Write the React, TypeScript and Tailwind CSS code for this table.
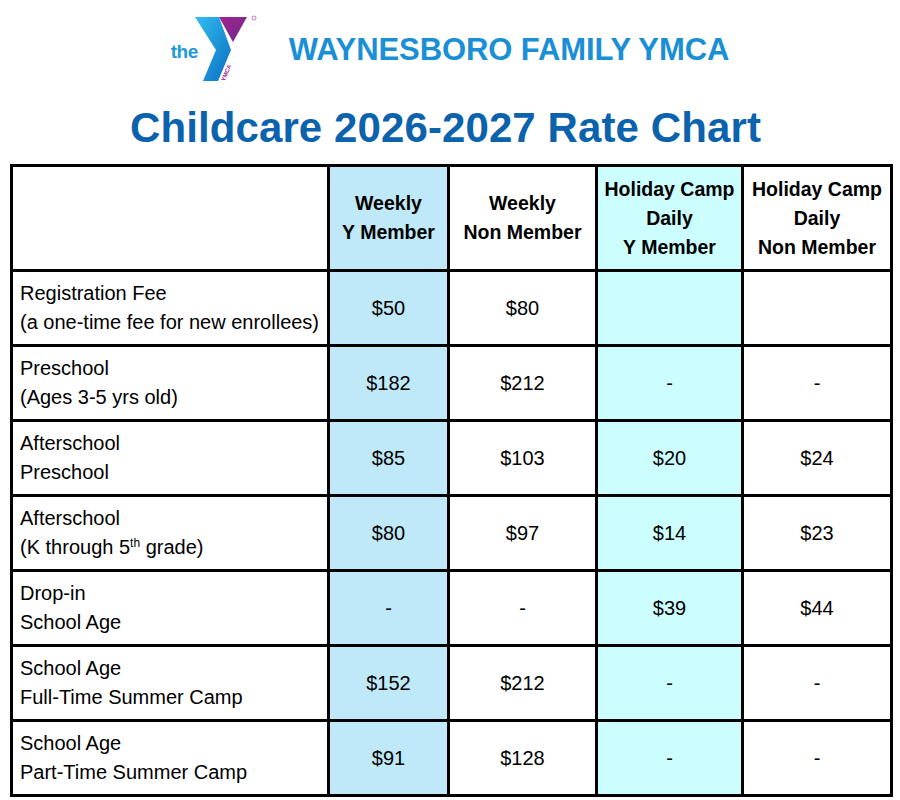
import React from 'react';

type Row = {
  label: React.ReactNode;
  values: string[];
};

const rows: Row[] = [
  {
    label: (
      <>
        Registration Fee
        <br />
        (a one-time fee for new enrollees)
      </>
    ),
    values: ['$50', '$80', '', ''],
  },
  {
    label: (
      <>
        Preschool
        <br />
        (Ages 3-5 yrs old)
      </>
    ),
    values: ['$182', '$212', '-', '-'],
  },
  {
    label: (
      <>
        Afterschool
        <br />
        Preschool
      </>
    ),
    values: ['$85', '$103', '$20', '$24'],
  },
  {
    label: (
      <>
        Afterschool
        <br />
        (K through 5<sup className="text-[12px] -top-[7px]">th</sup> grade)
      </>
    ),
    values: ['$80', '$97', '$14', '$23'],
  },
  {
    label: (
      <>
        Drop-in
        <br />
        School Age
      </>
    ),
    values: ['-', '-', '$39', '$44'],
  },
  {
    label: (
      <>
        School Age
        <br />
        Full-Time Summer Camp
      </>
    ),
    values: ['$152', '$212', '-', '-'],
  },
  {
    label: (
      <>
        School Age
        <br />
        Part-Time Summer Camp
      </>
    ),
    values: ['$91', '$128', '-', '-'],
  },
];

const colBg = ['bg-[#bfe8f8]', 'bg-white', 'bg-[#ccfeff]', 'bg-white'];

function YmcaLogo() {
  return (
    <div className="relative w-[90px] h-[70px] shrink-0">
      <span className="absolute left-0 top-[28px] text-[19px] font-bold text-[#1f9ad8] leading-none tracking-tight">
        the
      </span>
      <svg width="90" height="70" viewBox="0 0 90 70" className="absolute left-0 top-0">
        <defs>
          <linearGradient id="yblue" x1="0" y1="0" x2="1" y2="1">
            <stop offset="0" stopColor="#33bdf0" />
            <stop offset="1" stopColor="#0a6fc2" />
          </linearGradient>
          <linearGradient id="ypurple" x1="0" y1="0" x2="1" y2="1">
            <stop offset="0" stopColor="#a2248f" />
            <stop offset="1" stopColor="#6c2b8c" />
          </linearGradient>
        </defs>
        <path d="M24 3 L48 3 L60 36 L47 67 L32 67 L45 36 Z" fill="url(#yblue)" />
        <path d="M48 3 L76 3 L62 28 Z" fill="url(#ypurple)" />
        <circle cx="83" cy="4" r="2" fill="none" stroke="#a2248f" strokeWidth="0.6" />
      </svg>
      <span className="absolute left-[52px] top-[64px] text-[6px] font-bold text-[#a2248f] leading-none rotate-[-68deg] origin-left">
        YMCA
      </span>
    </div>
  );
}

export default function App() {
  return (
    <div className="w-[900px] h-[800px] bg-white font-['Liberation_Sans',Arial,sans-serif] text-black">
      {/* Header */}
      <div className="flex items-center justify-center gap-[28px] pt-[14px] h-[84px]">
        <YmcaLogo />
        <h1 className="text-[31px] font-bold text-[#1b8fd6] tracking-[-0.1px] leading-none whitespace-nowrap">
          WAYNESBORO FAMILY YMCA
        </h1>
      </div>

      <h2 className="text-center text-[42px] font-bold text-[#0b62ad] leading-none mt-[23px] pr-[9px] tracking-[0.1px]">
        Childcare 2026-2027 Rate Chart
      </h2>

      {/* Rate table */}
      <table className="mt-[15px] ml-[10px] w-[880px] table-fixed border-collapse border-[3px] border-black text-[20px] leading-[29px]">
        <colgroup>
          <col className="w-[317px]" />
          <col className="w-[120px]" />
          <col className="w-[148px]" />
          <col className="w-[146px]" />
          <col className="w-[149px]" />
        </colgroup>
        <thead className="text-[19.5px]">
          <tr className="h-[105px]">
            <th className="border-[3px] border-black bg-white"></th>
            <th className="border-[3px] border-black bg-[#bfe8f8] font-bold">
              Weekly
              <br />Y Member
            </th>
            <th className="border-[3px] border-black bg-white font-bold">
              Weekly
              <br />
              Non Member
            </th>
            <th className="border-[3px] border-black bg-[#ccfeff] font-bold">
              Holiday Camp
              <br />
              Daily
              <br />Y Member
            </th>
            <th className="border-[3px] border-black bg-white font-bold">
              Holiday Camp
              <br />
              Daily
              <br />
              Non Member
            </th>
          </tr>
        </thead>
        <tbody>
          {rows.map((row, i) => (
            <tr key={i} className="h-[75px]">
              <td className="border-[3px] border-black pl-[7px] text-left align-middle whitespace-nowrap">{row.label}</td>
              {row.values.map((v, j) => (
                <td key={j} className={`border-[3px] border-black text-center align-middle ${colBg[j]}`}>
                  {v}
                </td>
              ))}
            </tr>
          ))}
        </tbody>
      </table>
    </div>
  );
}
